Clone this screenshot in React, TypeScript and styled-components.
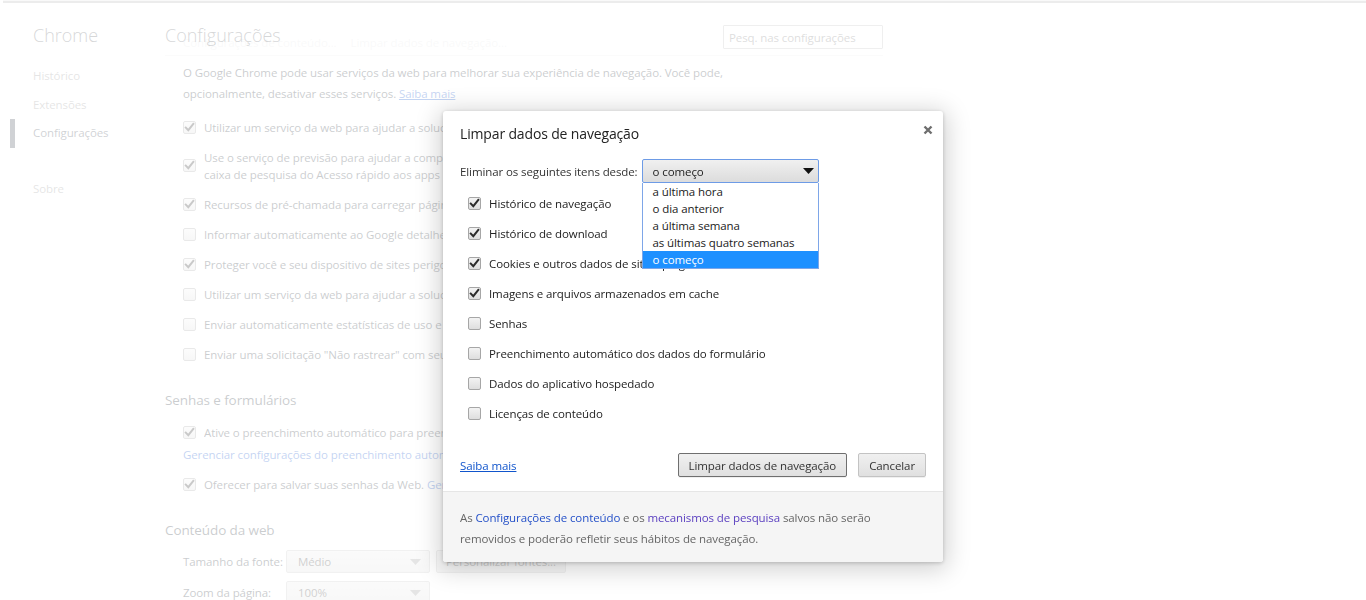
import React from 'react'
import styled, { createGlobalStyle, css } from 'styled-components'

const FONT = '"Open Sans", "Noto Sans", "Liberation Sans", sans-serif'

const GlobalStyle = createGlobalStyle`
  html, body {
    margin: 0;
    padding: 0;
    background: #ffffff;
    font-family: ${FONT};
    font-size: 11.5px;
    letter-spacing: -0.1px;
    color: #303942;
  }
  * { box-sizing: border-box; }
`

const privacyRows = [
  { checked: true, text: 'Utilizar um serviço da web para ajudar a solucionar erros de navegação' },
  {
    checked: true,
    text: 'Use o serviço de previsão para ajudar a completar pesquisas e URLs digitados na barra de endereço ou na',
    second: 'caixa de pesquisa do Acesso rápido aos apps',
  },
  { checked: true, text: 'Recursos de pré-chamada para carregar páginas mais rapidamente' },
  { checked: false, text: 'Informar automaticamente ao Google detalhes de possíveis incidentes de segurança' },
  { checked: true, text: 'Proteger você e seu dispositivo de sites perigosos' },
  { checked: false, text: 'Utilizar um serviço da web para ajudar a solucionar erros de ortografia' },
  { checked: false, text: 'Enviar automaticamente estatísticas de uso e relatórios de erros ao Google' },
  { checked: false, text: 'Enviar uma solicitação "Não rastrear" com seu tráfego de navegação' },
]

const clearItems = [
  { checked: true, text: 'Histórico de navegação' },
  { checked: true, text: 'Histórico de download' },
  { checked: true, text: 'Cookies e outros dados de site e plug-in' },
  { checked: true, text: 'Imagens e arquivos armazenados em cache' },
  { checked: false, text: 'Senhas' },
  { checked: false, text: 'Preenchimento automático dos dados do formulário' },
  { checked: false, text: 'Dados do aplicativo hospedado' },
  { checked: false, text: 'Licenças de conteúdo' },
]

const periods = ['a última hora', 'o dia anterior', 'a última semana', 'as últimas quatro semanas', 'o começo']

const Check = ({ checked }: { checked: boolean }) => (
  <CheckBox>
    {checked && (
      <svg width="11" height="11" viewBox="0 0 11 11">
        <path d="M1.8 5.6 L4.3 8.2 L9.3 1.9" fill="none" stroke="#2b2b2b" strokeWidth="2" strokeLinecap="square" />
      </svg>
    )}
  </CheckBox>
)

const Arrow = ({ color }: { color: string }) => (
  <svg width="11" height="6" viewBox="0 0 11 6">
    <path d="M0 0 H11 L5.5 6 Z" fill={color} />
  </svg>
)

const App = () => {
  return (
    <>
      <GlobalStyle />
      <TopRule />
      <Layout>
        <Sidebar>
          <SideTitle>Chrome</SideTitle>
          <NavList>
            <NavItem>Histórico</NavItem>
            <NavItem>Extensões</NavItem>
            <NavItem $selected>Configurações</NavItem>
            <NavGap />
            <NavItem>Sobre</NavItem>
          </NavList>
        </Sidebar>

        <Main>
          <Header>
            <PageTitle>Configurações</PageTitle>
            <GhostLinks>
              <span>Configurações de conteúdo...</span>
              <span>Limpar dados de navegação...</span>
            </GhostLinks>
            <Search placeholder="Pesq. nas configurações" />
          </Header>

          <Section>
            <Intro>
              O Google Chrome pode usar serviços da web para melhorar sua experiência de navegação. Você pode,
              <br />
              opcionalmente, desativar esses serviços. <Link>Saiba mais</Link>
            </Intro>
            <Rows>
              {privacyRows.map((r) => (
                <Row key={r.text}>
                  <Check checked={r.checked} />
                  <RowText>
                    {r.text}
                    {r.second && (
                      <>
                        <br />
                        {r.second}
                      </>
                    )}
                  </RowText>
                </Row>
              ))}
            </Rows>
          </Section>

          <SectionTitle>Senhas e formulários</SectionTitle>
          <Section>
            <Row>
              <Check checked />
              <RowText>Ative o preenchimento automático para preencher formulários da Web com um único clique.</RowText>
            </Row>
            <LinkRow>
              <Link $plain>Gerenciar configurações do preenchimento automático</Link>
            </LinkRow>
            <Row>
              <Check checked />
              <RowText>
                Oferecer para salvar suas senhas da Web. <Link $plain>Gerenciar senhas</Link>
              </RowText>
            </Row>
          </Section>

          <SectionTitle>Conteúdo da web</SectionTitle>
          <FieldSection>
            <FieldRow>
              <FieldLabel>Tamanho da fonte:</FieldLabel>
              <BgSelect>
                Médio
                <Arrow color="#999" />
              </BgSelect>
              <BgButton>Personalizar fontes...</BgButton>
            </FieldRow>
            <FieldRow>
              <FieldLabel>Zoom da página:</FieldLabel>
              <BgSelect>
                100%
                <Arrow color="#999" />
              </BgSelect>
            </FieldRow>
          </FieldSection>
        </Main>
      </Layout>

      <Overlay />

      <Dialog>
        <DialogBody>
          <DialogHead>
            <DialogTitle>Limpar dados de navegação</DialogTitle>
            <Close>
              <svg width="10" height="10" viewBox="0 0 10 10">
                <path d="M1.5 1.5 L8.5 8.5 M8.5 1.5 L1.5 8.5" stroke="#6e6e6e" strokeWidth="2.4" />
              </svg>
            </Close>
          </DialogHead>

          <PeriodRow>
            <span>Eliminar os seguintes itens desde:</span>
            <PeriodSelect>
              <SelectBox>
                o começo
                <Arrow color="#111" />
              </SelectBox>
              <OptionList>
                {periods.map((p, i) => (
                  <Option key={p} $active={i === periods.length - 1}>
                    {p}
                  </Option>
                ))}
              </OptionList>
            </PeriodSelect>
          </PeriodRow>

          <ClearList>
            {clearItems.map((c) => (
              <ClearRow key={c.text}>
                <Check checked={c.checked} />
                <span>{c.text}</span>
              </ClearRow>
            ))}
          </ClearList>

          <ActionRow>
            <Link>Saiba mais</Link>
            <Buttons>
              <Button $default>Limpar dados de navegação</Button>
              <Button>Cancelar</Button>
            </Buttons>
          </ActionRow>
        </DialogBody>

        <DialogFooter>
          As <FooterLink>Configurações de conteúdo</FooterLink> e os{' '}
          <FooterLink $visited>mecanismos de pesquisa</FooterLink> salvos não serão
          <br />
          removidos e poderão refletir seus hábitos de navegação.
        </DialogFooter>
      </Dialog>
    </>
  )
}

export default App

const TopRule = styled.div`
  height: 3px;
  margin-left: 3px;
  border-top: 1px solid #e6e6e6;
  border-bottom: 2px solid #b4b4b4;
`

const Layout = styled.div`
  display: flex;
`

const Sidebar = styled.div`
  width: 165px;
  flex-shrink: 0;
  padding: 20px 0 0 0;
`

const SideTitle = styled.div`
  padding-left: 33px;
  font-size: 18px;
  font-weight: 300;
  line-height: 24px;
  letter-spacing: 0;
  color: #5c6166;
`

const NavList = styled.div`
  display: flex;
  flex-direction: column;
  margin-top: 15px;
`

const NavItem = styled.div<{ $selected?: boolean }>`
  height: 28.5px;
  line-height: 28.5px;
  color: #999999;
  border-left: 5px solid transparent;
  margin-left: 10px;
  padding-left: 18px;

  ${(p) =>
    p.$selected &&
    css`
      border-left-color: #464e5a;
      color: #464e5a;
    `}
`

const NavGap = styled.div`
  height: 27px;
`

const Main = styled.div`
  width: 718px;
`

const Header = styled.div`
  position: relative;
  display: flex;
  align-items: center;
  justify-content: space-between;
  height: 53px;
  padding-top: 18px;
  padding-bottom: 6px;
  border-bottom: 1px solid #eeeeee;
`

const PageTitle = styled.h1`
  margin: 0;
  font-size: 18px;
  font-weight: 300;
  letter-spacing: 0;
  color: #5c6166;
`

const GhostLinks = styled.div`
  position: absolute;
  left: 18px;
  top: 32px;
  display: flex;
  gap: 14px;
  opacity: 0.12;
  color: #303942;
`

const Search = styled.input`
  width: 160px;
  height: 24px;
  margin-top: 4px;
  padding: 0 5px;
  border: 1px solid #bfbfbf;
  border-radius: 1px;
  font-family: ${FONT};
  font-size: 11.5px;
  letter-spacing: -0.1px;
  outline: none;

  &::placeholder {
    color: #7a7a7a;
  }
`

const Section = styled.div`
  padding-left: 18px;
`

const FieldSection = styled.div`
  padding: 3px 0 0 18px;
`

const Intro = styled.p`
  margin: 6px 0 8px;
  line-height: 21px;
  width: 600px;
`

const Link = styled.a<{ $plain?: boolean }>`
  color: #1155cc;
  text-decoration: ${(p) => (p.$plain ? 'none' : 'underline')};
  cursor: pointer;
`

const Rows = styled.div`
  display: flex;
  flex-direction: column;
`

const Row = styled.div`
  display: flex;
  align-items: center;
  gap: 8px;
  padding: 6.5px 0;
  line-height: 17px;
  white-space: nowrap;
  overflow: hidden;
`

const RowText = styled.span`
  overflow: hidden;
`

const LinkRow = styled.div`
  line-height: 17px;
  margin: -1.5px 0 6.5px;
`

const SectionTitle = styled.h3`
  margin: 22px 0 8px;
  font-size: 13.5px;
  font-weight: 400;
  color: #303942;
`

const FieldRow = styled.div`
  display: flex;
  align-items: center;
  gap: 6px;
  margin-bottom: 8px;
`

const FieldLabel = styled.span`
  width: 97px;
  white-space: nowrap;
  color: #303942;
`

const BgSelect = styled.div`
  width: 144px;
  height: 23px;
  display: flex;
  align-items: center;
  justify-content: space-between;
  padding: 0 8px 0 11px;
  border: 1px solid #c8c8c8;
  border-radius: 2px;
  background: linear-gradient(#ededed, #e0e0e0);
  color: #444;
`

const BgButton = styled.div`
  height: 23px;
  line-height: 21px;
  padding: 0 9px;
  border: 1px solid #c8c8c8;
  border-radius: 2px;
  background: linear-gradient(#ededed, #e0e0e0);
  color: #444;
`

const CheckBox = styled.span`
  width: 13px;
  height: 13px;
  flex-shrink: 0;
  display: inline-flex;
  align-items: center;
  justify-content: center;
  border: 1px solid #a6a6a6;
  border-radius: 2px;
  background: linear-gradient(#f3f3f3, #dedede);
`

const Overlay = styled.div`
  position: fixed;
  inset: 0;
  background: rgba(255, 255, 255, 0.75);
`

const Dialog = styled.div`
  position: fixed;
  left: 443px;
  top: 111px;
  width: 500px;
  display: flex;
  flex-direction: column;
  background: #ffffff;
  border-radius: 3px;
  box-shadow: 0 4px 24px 4px rgba(0, 0, 0, 0.18), 0 1px 4px rgba(0, 0, 0, 0.2);
  color: #333333;
`

const DialogBody = styled.div`
  padding: 12px 17px 14px;
`

const DialogHead = styled.div`
  display: flex;
  justify-content: space-between;
  align-items: flex-start;
  height: 34px;
`

const DialogTitle = styled.h2`
  margin: 0;
  padding-top: 1px;
  font-size: 14px;
  font-weight: 400;
  letter-spacing: -0.15px;
  line-height: 20px;
  color: #222222;
`

const Close = styled.span`
  margin: 2px -7px 0 0;
  display: inline-flex;
`

const PeriodRow = styled.div`
  display: flex;
  align-items: center;
  gap: 4px;
  margin-top: 2px;
`

const PeriodSelect = styled.div`
  position: relative;
  width: 177px;
`

const SelectBox = styled.div`
  height: 24px;
  display: flex;
  align-items: center;
  justify-content: space-between;
  padding: 0 4px 0 10px;
  border: 1px solid #6d9be6;
  border-radius: 2px;
  background: linear-gradient(#f0f0f0, #dcdcdc);
  color: #222;
`

const OptionList = styled.div`
  position: absolute;
  left: 0;
  right: 0;
  top: 24px;
  display: flex;
  flex-direction: column;
  background: #ffffff;
  border: 1px solid #7ea6e8;
  border-top: none;
  z-index: 2;
`

const Option = styled.div<{ $active?: boolean }>`
  height: 17px;
  line-height: 17px;
  padding-left: 10px;
  color: ${(p) => (p.$active ? '#ffffff' : '#222222')};
  background: ${(p) => (p.$active ? '#1e90ff' : 'transparent')};
`

const ClearList = styled.div`
  display: flex;
  flex-direction: column;
  padding-left: 8px;
  margin-top: 5px;
`

const ClearRow = styled.div`
  display: flex;
  align-items: center;
  gap: 8px;
  height: 30px;
  color: #222222;
`

const ActionRow = styled.div`
  display: flex;
  align-items: center;
  justify-content: space-between;
  margin-top: 25px;
`

const Buttons = styled.div`
  display: flex;
  gap: 11px;
`

const Button = styled.button<{ $default?: boolean }>`
  height: 24px;
  padding: 0 10px;
  font-family: ${FONT};
  font-size: 11.5px;
  letter-spacing: -0.1px;
  color: #333333;
  border: 1px solid ${(p) => (p.$default ? '#6f6f6f' : '#c3c3c3')};
  border-radius: 2px;
  background: linear-gradient(#f0f0f0, #e0e0e0);
  box-shadow: 0 1px 0 rgba(0, 0, 0, 0.06);
`

const DialogFooter = styled.div`
  padding: 15px 17px 13px;
  line-height: 21px;
  background: #f5f5f5;
  border-top: 1px solid #e6e6e6;
  border-radius: 0 0 3px 3px;
  color: #666666;
`

const FooterLink = styled.a<{ $visited?: boolean }>`
  color: ${(p) => (p.$visited ? '#5a3fc0' : '#2450c8')};
  text-decoration: none;
`
